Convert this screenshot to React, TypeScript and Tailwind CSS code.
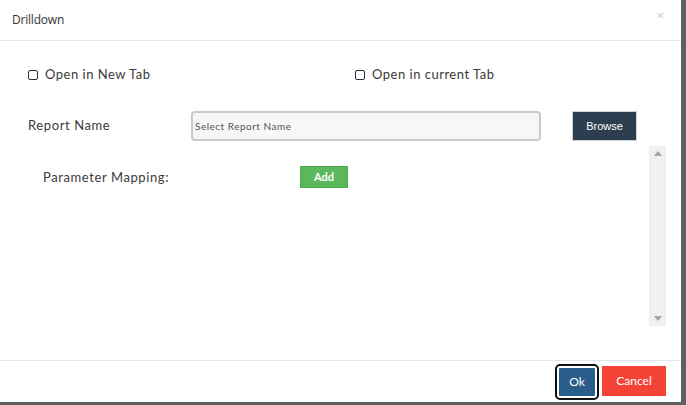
import React from 'react'

const body = { fontFamily: 'Lato, "Open Sans", sans-serif' }

// チェックボックス
function Check({ label }: { label: string }) {
  return (
    <label className="flex items-center gap-[7px] text-[13px] text-[#3a3a3a] tracking-[0.5px]" style={body}>
      <span className="w-[10px] h-[10px] border-[1.5px] border-[#2b3040] rounded-[2px] bg-white" />
      {label}
    </label>
  )
}

export default function App() {
  return (
    <div className="w-[686px] h-[405px] bg-[#5f5f5f] overflow-hidden">
      <div className="w-[681px] h-[402px] bg-white flex flex-col">
        {/* ヘッダー */}
        <div className="h-[41px] shrink-0 border-b border-[#e5e5e5] flex items-center justify-between pl-[12px] pr-[17px]">
          <h1 className="text-[12px] text-[#333] tracking-[-0.2px]" style={{ fontFamily: '"Open Sans", sans-serif' }}>Drilldown</h1>
          <span className="text-[13px] text-[#c8c8c8] leading-none mb-[9px]" style={{ fontFamily: '"Liberation Sans", sans-serif' }}>×</span>
        </div>

        {/* 本文 */}
        <div className="flex-1 flex flex-col">
          <div className="flex items-center pl-[28px] mt-[26px] h-[16px]">
            <div className="w-[327px]"><Check label="Open in New Tab" /></div>
            <Check label="Open in current Tab" />
          </div>

          <div className="flex items-center mt-[28px] pl-[28px]">
            <span className="w-[163px] text-[13px] text-[#3a3a3a] tracking-[0.6px]" style={body}>Report Name</span>
            <div className="w-[350px] h-[30px] rounded-[4px] border-2 border-[#c9c9c9] bg-[#f7f7f7] flex items-center pl-[2px]">
              <span className="text-[10px] text-[#555] tracking-[0.5px]" style={body}>Select Report Name</span>
            </div>
            <button
              className="ml-[31px] w-[65px] h-[30px] bg-[#2c3e50] border border-[#d0d4d8] text-white text-[11px]"
              style={{ fontFamily: '"Liberation Sans", Arial, sans-serif' }}
            >
              Browse
            </button>
          </div>

          {/* パラメータ */}
          <div className="mt-[5px] flex w-[666px] h-[180px]">
            <div className="flex-1 flex items-start pt-[20px] pl-[43px]">
              <span className="w-[257px] mt-[2px] text-[13px] text-[#3a3a3a] tracking-[0.6px]" style={body}>Parameter Mapping:</span>
              <button
                className="w-[48px] h-[22px] bg-[#5cb85c] border border-[#4cae4c] text-white text-[11px] font-bold"
                style={body}
              >
                Add
              </button>
            </div>
            <div className="w-[17px] bg-[#f0f0f0] flex flex-col items-center justify-between py-[5px]">
              <svg width="8" height="5" viewBox="0 0 8 5"><path d="M0 5L4 0L8 5Z" fill="#a3a3a3" /></svg>
              <svg width="8" height="5" viewBox="0 0 8 5"><path d="M0 0L4 5L8 0Z" fill="#a3a3a3" /></svg>
            </div>
          </div>
        </div>

        {/* フッター */}
        <div className="h-[42px] shrink-0 border-t border-[#e5e5e5] flex items-start justify-end gap-[5px] pr-[15px] pt-[5px]">
          <button
            className="w-[40px] h-[32px] bg-[#2a5d8a] text-white text-[12px] rounded-[3px] border-2 border-white outline-2 outline-[#111]"
            style={body}
          >
            Ok
          </button>
          <button className="w-[64px] h-[30px] bg-[#f44336] text-white text-[12px]" style={body}>
            Cancel
          </button>
        </div>
      </div>
    </div>
  )
}
